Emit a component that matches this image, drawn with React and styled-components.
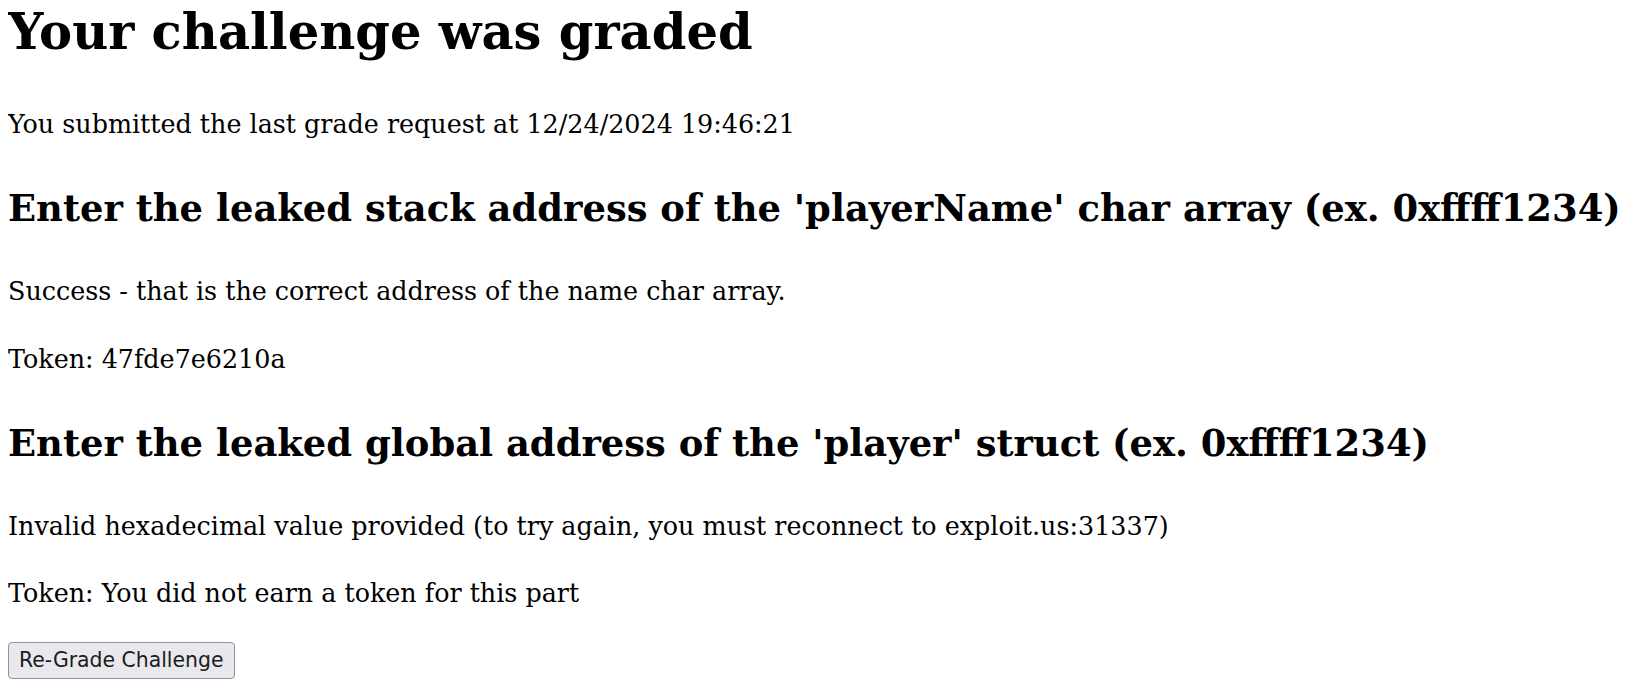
import React from 'react'
import styled, { createGlobalStyle } from 'styled-components'

const GlobalStyle = createGlobalStyle`
  body {
    margin: 0 8px;
    background: #ffffff;
    color: #000000;
    font-family: "DejaVu Serif", serif;
  }
`

const Page = styled.main`
  display: block;
`

const Title = styled.h1`
  font-size: 49.6px;
  font-weight: 700;
  line-height: 64px;
  margin: 0 0 41px;
`

const Heading = styled.h2`
  font-size: 36.9px;
  font-weight: 700;
  line-height: 58px;
  margin: 35px 0;
  white-space: nowrap;
`

const Text = styled.p`
  font-size: 25.4px;
  line-height: 39px;
  margin: 28.5px 0;
  white-space: nowrap;
`

const Section = styled.section`
  display: block;
`

const Form = styled.form`
  margin: 0;
`

const Button = styled.button`
  font-family: "DejaVu Sans", sans-serif;
  font-size: 20.4px;
  color: #1b1b1b;
  background: #e9e9ed;
  border: 1px solid #8f8f9d;
  border-radius: 4px;
  height: 37px;
  padding: 0 10px;
  cursor: pointer;

  &:hover {
    background: #d0d0d7;
  }
`

const parts = [
  {
    question: "Enter the leaked stack address of the 'playerName' char array (ex. 0xffff1234)",
    result: 'Success - that is the correct address of the name char array.',
    token: '47fde7e6210a',
  },
  {
    question: "Enter the leaked global address of the 'player' struct (ex. 0xffff1234)",
    result: 'Invalid hexadecimal value provided (to try again, you must reconnect to exploit.us:31337)',
    token: 'You did not earn a token for this part',
  },
]

const App = () => {
  return (
    <Page>
      <GlobalStyle />
      <Title>Your challenge was graded</Title>
      <Text>You submitted the last grade request at 12/24/2024 19:46:21</Text>
      {parts.map((part) => (
        <Section key={part.question}>
          <Heading>{part.question}</Heading>
          <Text>{part.result}</Text>
          <Text>Token: {part.token}</Text>
        </Section>
      ))}
      <Form onSubmit={(e) => e.preventDefault()}>
        <Button type="submit">Re-Grade Challenge</Button>
      </Form>
    </Page>
  )
}

export default App
